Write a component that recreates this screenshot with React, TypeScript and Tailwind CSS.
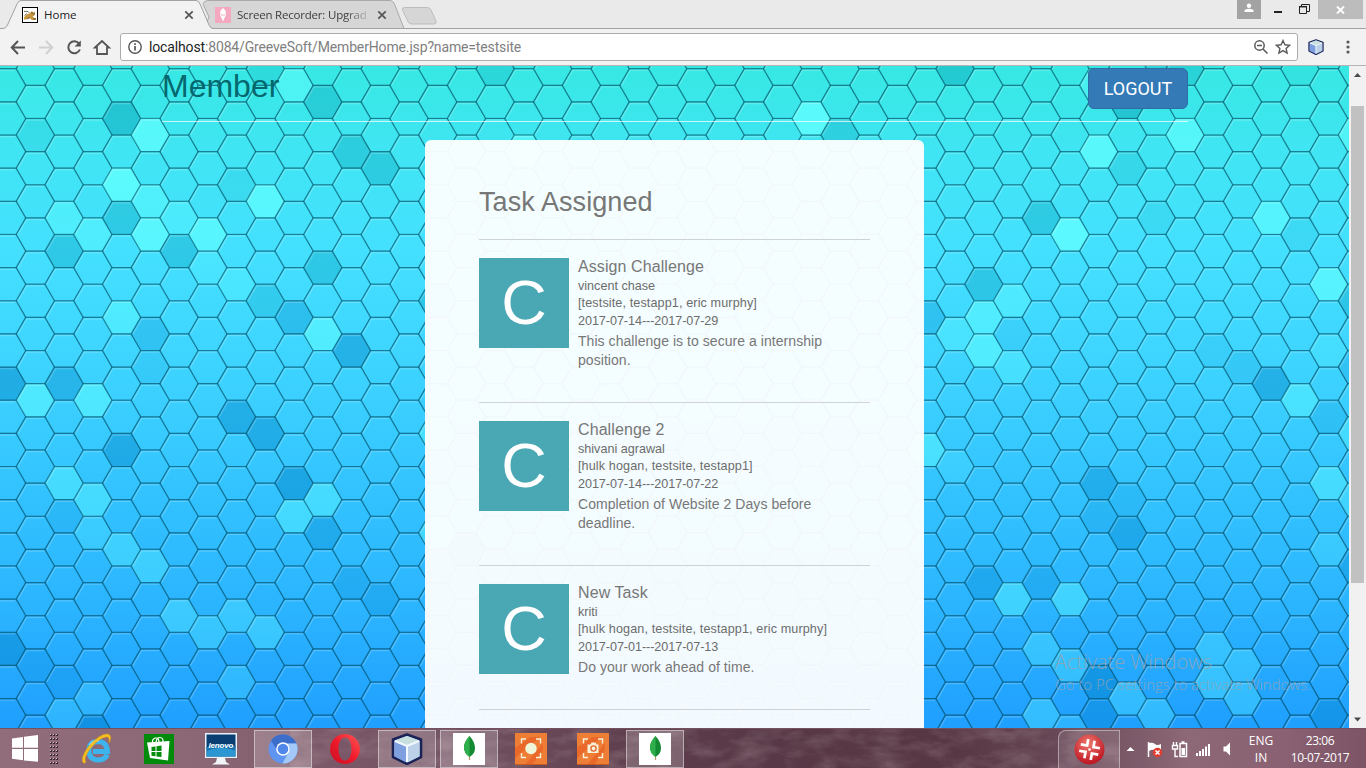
import React from "react";

const DX = 28.74;
const DY = 33.15;

// [x, y, tint]: positive lightens a cell, negative darkens it
const TINTS: [number, number, number][] = [
  [121, 119, -4], [264, 68, -1.5], [323, 102, -3], [35, 135, -1], [352, 152, -3], [380, 168, -3],
  [237, 185, -1], [121, 218, -3], [64, 252, -3], [178, 252, -3], [323, 267, -3], [265, 301, -2.2],
  [294, 317, -3], [150, 334, -2.2], [352, 350, -4], [6, 383, -4.5], [64, 384, -3.5], [150, 367, -1],
  [294, 85, 5], [150, 135, 7], [121, 184, 8], [150, 201, 4.5], [64, 217, 4], [93, 234, 4], [150, 234, 7],
  [178, 217, 3], [207, 234, 6.5], [265, 201, 7], [207, 267, 2], [237, 284, 2.5], [121, 317, 4.5],
  [323, 334, 5.5], [35, 400, 5], [93, 400, 5], [35, 102, 1],
  [237, 417, -4], [265, 433, -4], [121, 450, -4], [294, 483, -4.5], [64, 516, -1.2], [323, 533, -3],
  [352, 583, -2], [380, 599, -2.2], [6, 649, -4], [35, 666, -1.6], [64, 682, -1.6], [93, 732, -4.5],
  [64, 483, 4], [93, 499, 4], [93, 533, 2], [121, 549, 3], [150, 566, 3], [323, 500, 4], [294, 517, 4],
  [178, 616, 3], [237, 616, 2.7], [207, 633, 2.7], [265, 633, 3], [237, 682, 2], [93, 699, 2], [64, 715, 2.2],
  [438, 433, 4], [438, 533, 4], [438, 300, -3],
  [955, 68, -3.5], [1127, 102, -4], [1185, 68, -2.5], [1271, 52, -3], [1156, 52, -2], [1242, 68, 2],
  [1300, 68, -0.6], [1127, 168, -1.6], [1041, 218, -3], [1156, 218, -1], [1300, 234, -1], [984, 284, -3],
  [926, 317, -2.5], [1012, 334, -0.8], [1213, 350, -0.8], [1242, 367, -1.3], [1271, 384, -4],
  [1098, 152, 7], [1185, 135, 6.5], [1070, 234, 8], [1271, 218, 6], [1328, 284, 6.5], [1012, 301, 4],
  [984, 317, 5], [955, 334, 3], [984, 351, 5.5], [1012, 367, 3], [1300, 400, 4], [1098, 85, 4],
  [1357, 135, 5], [1357, 300, -3], [1328, 350, 2], [1357, 367, -2], [1328, 417, -1.6],
  [1098, 483, -3.2], [1127, 499, -1.2], [1098, 516, -1.6], [1127, 533, -3.4], [984, 583, -2.8],
  [1041, 583, -2], [1098, 682, -4.5], [1098, 715, -3.2], [1328, 715, -3.4], [1357, 567, -3],
  [1357, 433, 3], [1357, 500, 3], [926, 450, 4.5], [955, 467, 1.5], [1328, 483, 4], [1328, 549, 2],
  [1012, 599, 4], [1070, 599, 4], [1041, 649, 2.7], [1070, 665, 2.7], [1213, 649, 2.5], [1242, 665, 2.5],
  [1213, 682, 3], [1242, 699, 2.7], [1127, 699, 2.7], [1156, 715, 2.7], [1041, 715, 3], [1070, 732, 2],
  [495, 68, -2], [811, 118, 8], [840, 135, -2.5], [524, 152, 6], [466, 550, -4],
];

const CELLS = (() => {
  const out: { x: number; y: number; t: number }[] = [];
  for (let c = 0; c <= 48; c++) {
    for (let r = -2; r <= 20; r++) {
      const x = 6.6 + DX * c;
      const y = (c % 2 ? 101.9 : 85.3) + DY * r;
      const hit = TINTS.find((k) => Math.abs(k[0] - x) < 9 && Math.abs(k[1] - y) < 9);
      out.push({ x, y: y - 66, t: hit ? hit[2] : 0 });
    }
  }
  return out;
})();

const hex = (x: number, y: number) => {
  const w = 19.15, t = 9.6, h = 16.57;
  return `${x - w},${y} ${x - t},${y - h} ${x + t},${y - h} ${x + w},${y} ${x + t},${y + h} ${x - t},${y + h}`;
};

const Honeycomb = () => (
  <svg className="absolute inset-0" width="1349" height="662" viewBox="0 0 1349 662">
    <defs>
      <linearGradient id="sea" x1="0" y1="0" x2="0" y2="1">
        <stop offset="0" stopColor="#36e8e3" />
        <stop offset="0.13" stopColor="#40e5f3" />
        <stop offset="0.28" stopColor="#44e0ff" />
        <stop offset="0.5" stopColor="#3bd0ff" />
        <stop offset="0.65" stopColor="#32c2ff" />
        <stop offset="0.82" stopColor="#2bb4ff" />
        <stop offset="1" stopColor="#1f9fff" />
      </linearGradient>
    </defs>
    <rect width="1349" height="662" fill="url(#sea)" />
    {CELLS.map((c, i) => (
      <g key={i}>
        {c.t !== 0 && (
          <polygon points={hex(c.x, c.y)} fill={c.t > 0 ? "#62ffff" : c.y > 250 ? "#0080c4" : "#0094b0"} fillOpacity={Math.abs(c.t) / 10} />
        )}
        <polyline
          points={`${c.x - 17.2},${c.y} ${c.x - 8.6},${c.y - 14.9} ${c.x + 8.6},${c.y - 14.9}`}
          fill="none" stroke="#ffffff" strokeOpacity="0.2" strokeWidth="1.2"
        />
        <polygon points={hex(c.x, c.y)} fill="none" stroke="#00485c" strokeOpacity="0.4" strokeWidth="1.2" />
      </g>
    ))}
  </svg>
);

const Tomcat = () => (
  <svg width="16" height="16" viewBox="0 0 16 16">
    <rect x="0.5" y="0.5" width="15" height="15" fill="#fff" stroke="#000" />
    <path d="M2 10.500Q4 7 7.500 6.500L10 4l1 1.500 2-1-.3 3.500-2 1.500 1.500 1.500H14V13H10L7.500 11 4 12.500H2z" fill="#c8963c" />
    <path d="M2 4.500h4L7.500 6M2.500 8.500L5 6.500M9.500 5l1 2M12 6v2M5 12l3-1.500M11 12h3" stroke="#5b5244" strokeWidth=".8" fill="none" />
  </svg>
);

const Cone = () => (
  <svg width="16" height="16" viewBox="0 0 16 16">
    <rect width="16" height="16" fill="#f4a9c0" />
    <path d="M8 1l2 2 1 2-.6 2 .6 1-1.500 3-1.500 3.500L6.500 11 5 8l.6-1L5 5l1-2z" fill="#fff" />
    <path d="M6 8h4" stroke="#e9b7c6" />
  </svg>
);

const Cube = ({ size }: { size: number }) => (
  <svg width={size} height={size} viewBox="0 0 32 32">
    <path d="M16 1.500L30 6.500V24L16 31 2 24V6.500z" fill="#a9c4ea" stroke="#1b2255" strokeWidth="2.600" strokeLinejoin="round" />
    <path d="M16 3L28 7.500 16 12.500 4 7.500z" fill="#c8e0dd" />
    <path d="M3.500 8.500L15.500 13.500V29.500L3.500 23.500z" fill="#7e9fe0" />
    <path d="M16.500 13.500L28.500 8.500V23.500L16.500 29.500z" fill="#bcd0e8" />
    <path d="M16 29V13L28 8M16 13L4 8" stroke="#f2f8ff" strokeWidth="2" fill="none" />
  </svg>
);

const TabClose = () => (
  <svg width="10" height="10" viewBox="0 0 10 10" className="shrink-0">
    <path d="M1.300 1.300l7.400 7.400M8.700 1.300L1.300 8.700" stroke="#555" strokeWidth="1.700" />
  </svg>
);

const TabStrip = () => (
  <div className="relative flex h-[29px] shrink-0 bg-[#eaeaea] font-['Open_Sans','Noto_Sans',sans-serif] text-[11.5px]">
    <svg className="absolute inset-0" width="1366" height="29" viewBox="0 0 1366 29">
      <path d="M204 28.500L209 17 203 4Q204 .5 208 .5H390Q393 .5 394.500 4L404 28.500z" fill="#d6d6d6" stroke="#a9a9a9" />
      <path d="M404.500 7.500H427Q430 7.500 431 10L436 21Q437 24 433 24H412Q409 24 408 21.500L402.500 10Q402 7.500 404.500 7.500z" fill="#d6d6d6" stroke="#bcbcbc" />
      <path d="M211 28.500H1366" stroke="#a2a2a2" />
      <path d="M0 28.500H3Q6 28.500 7.500 25L17 4Q18.500 .5 21 .5H196Q199 .5 200 4L209 25Q210.500 28.500 213 28.500V30H0z" fill="#f2f2f2" stroke="#a2a2a2" />
    </svg>
    <div className="relative flex w-[194px] items-center pl-[22px]">
      <Tomcat />
      <span className="ml-[6px] flex-1 text-[#222]">Home</span>
      <TabClose />
    </div>
    <div className="relative flex w-[194px] items-center pl-[21px]">
      <Cone />
      <span className="ml-[6px] w-[135px] whitespace-nowrap tracking-[-0.2px] text-[#3c3c3c] [mask-image:linear-gradient(to_right,black_108px,transparent_136px)]">Screen Recorder: Upgrad</span>
      <span className="ml-[5px]"><TabClose /></span>
    </div>
    <div className="relative ml-auto flex h-[19px] items-start">
      <div className="flex h-[19px] w-6 items-center justify-center bg-[#a3a3a3]">
        <svg width="10" height="10" viewBox="0 0 10 10" className="mb-1"><circle cx="5" cy="2.800" r="2.200" fill="#fff" /><path d="M0.500 9V7.500Q1 6 5 5.700 9 6 9.500 7.500V9z" fill="#fff" /></svg>
      </div>
      <svg width="57" height="19" viewBox="0 0 57 19">
        <path d="M13 12h8" stroke="#222" strokeWidth="2" />
        <path d="M38.500 6.500h7v7h-7zM40.500 6V4.500h8v7H46" fill="none" stroke="#222" strokeWidth="1" />
        <path d="M38 6.700h8" stroke="#222" strokeWidth="1.500" />
      </svg>
      <div className="mr-[3px] flex h-[19px] w-[45px] items-center justify-center bg-[#bcbcbc]">
        <svg width="9" height="8" viewBox="0 0 9 8"><path d="M1 .5l7 7M8 .5l-7 7" stroke="#fff" strokeWidth="1.900" /></svg>
      </div>
    </div>
  </div>
);

const Toolbar = () => (
  <div className="flex h-[37px] shrink-0 items-center border-b border-[#b6b4b6] bg-[#f2f2f2]">
    <svg width="112" height="20" viewBox="0 0 112 20" fill="none" strokeWidth="2" className="ml-[8px] shrink-0">
      <path d="M17 10.500H4M10 4L3.800 10.500 10 17" stroke="#555" />
      <path d="M31 10.500H44M38 4L44.200 10.500 38 17" stroke="#d0d0d0" />
      <path d="M71 6.500A6 6 0 1 0 71.900 12.500" stroke="#555" />
      <path d="M72.800 3.500V9.500H66.500z" fill="#555" />
      <path d="M87 10.500L94 4l7 6.500H99V17H89V10.500z" stroke="#555" strokeWidth="1.800" />
    </svg>
    <div className="flex h-7 w-[1178px] shrink-0 items-center rounded-[3px] border border-[#aeaaae] bg-white pl-[7px] pr-[6px]">
      <svg width="14" height="14" viewBox="0 0 14 14" className="shrink-0"><circle cx="7" cy="7" r="6.200" fill="none" stroke="#555" strokeWidth="1.400" /><path d="M7 6v4.500M7 3.300v1.700" stroke="#555" strokeWidth="1.700" /></svg>
      <span className="ml-[7px] flex-1 font-['Roboto',sans-serif] text-[14px] tracking-[-0.145px] text-[#808080]"><span className="text-[#222]">localhost</span>:8084/GreeveSoft/MemberHome.jsp?name=testsite</span>
      <svg width="38" height="16" viewBox="0 0 38 16" fill="none" stroke="#5a5a5a">
        <circle cx="6.500" cy="6.500" r="4.700" strokeWidth="1.500" /><path d="M4 6.500h5M10 10l4.500 4.500" strokeWidth="1.600" />
        <path d="M30 1.500l1.900 4.300 4.700.5-3.500 3.100 1 4.600-4.100-2.400-4.100 2.400 1-4.600-3.500-3.100 4.700-.5z" strokeWidth="1.400" />
      </svg>
    </div>
    <div className="ml-[10px]"><Cube size={16} /></div>
    <svg width="4" height="14" viewBox="0 0 4 14" className="ml-[22px]" fill="#5a5a5a"><circle cx="2" cy="2" r="1.600" /><circle cx="2" cy="7" r="1.600" /><circle cx="2" cy="12" r="1.600" /></svg>
  </div>
);

type Task = { title: string; by: string; team: string; dates: string; text: string; height: string };

const TASKS: Task[] = [
  { title: "Assign Challenge", by: "vincent chase", team: "[testsite, testapp1, eric murphy]", dates: "2017-07-14---2017-07-29", text: "This challenge is to secure a internship position.", height: "h-[163px]" },
  { title: "Challenge 2", by: "shivani agrawal", team: "[hulk hogan, testsite, testapp1]", dates: "2017-07-14---2017-07-22", text: "Completion of Website 2 Days before deadline.", height: "h-[163px]" },
  { title: "New Task", by: "kriti", team: "[hulk hogan, testsite, testapp1, eric murphy]", dates: "2017-07-01---2017-07-13", text: "Do your work ahead of time.", height: "h-[144px]" },
];

const TaskRow = ({ task }: { task: Task }) => (
  <div className={`flex border-t border-[#cfd3d5] pt-[18px] ${task.height}`}>
    <div className="flex h-[90px] w-[90px] shrink-0 justify-center bg-[#4aa8b5] text-[63px] leading-[89px] text-white">C</div>
    <div className="ml-[9px] w-[270px] text-[12.6px] leading-[17.5px] text-[#6c6c6c]">
      <div className="mb-[1.5px] text-[16px] leading-[18px] tracking-[0.09px] text-[#777]">{task.title}</div>
      <div>{task.by}</div>
      <div className="whitespace-nowrap tracking-[0.12px]">{task.team}</div>
      <div className="tracking-[-0.05px]">{task.dates}</div>
      <div className="mt-[1.5px] text-[14px] leading-[19px] tracking-[0.05px] text-[#777]">{task.text}</div>
    </div>
  </div>
);

const Page = () => (
  <div className="relative h-[662px] w-[1349px] overflow-hidden font-['Liberation_Sans',Arial,sans-serif]">
    <Honeycomb />
    <div className="relative ml-[162px] flex h-[56px] w-[1026px] items-start justify-between border-b border-white/70">
      <h1 className="mt-[2px] text-[32px] leading-[36px] text-[#05686e]">Member</h1>
      <button className="mt-[2px] h-[41px] w-[100px] rounded-[6px] border border-[#2e6da4] bg-[#337ab7] font-['Roboto',sans-serif] text-[18px] text-white">LOGOUT</button>
    </div>
    <div className="relative ml-[425px] mt-[18px] h-[600px] w-[499px] rounded-[6px] bg-white/[0.945] px-[54px] pt-[45px]">
      <h2 className="h-[54px] text-[27px] leading-[35px] tracking-[0.08px] text-[#777]">Task Assigned</h2>
      {TASKS.map((t) => <TaskRow key={t.title} task={t} />)}
      <div className="h-px bg-[#cfd3d5]" />
    </div>
    <div className="absolute left-[1055px] top-[583px] font-['Open_Sans','Noto_Sans',sans-serif] font-light text-[#9aa3ab]/85">
      <div className="whitespace-nowrap text-[20px] leading-[26px]">Activate Windows</div>
      <div className="whitespace-nowrap text-[14.9px] leading-[19px]">Go to PC settings to activate Windows.</div>
    </div>
  </div>
);

const Scrollbar = () => (
  <div className="flex w-[17px] flex-col items-center bg-[#f1f1f1]">
    <svg width="17" height="17" viewBox="0 0 17 17"><path d="M5 11h7L8.500 7z" fill="#4b4b4b" /></svg>
    <div className="mt-[23px] h-[477px] w-[13px] bg-[#c1c1c1]" />
    <svg width="17" height="17" viewBox="0 0 17 17" className="mt-auto"><path d="M5 6.500h7L8.500 10.500z" fill="#4b4b4b" /></svg>
  </div>
);

const Leaf = () => (
  <svg width="32" height="32" viewBox="0 0 32 32">
    <rect width="32" height="32" fill="#fff" />
    <path d="M16.500 3Q22 9 22 15T16.500 24Q11 20 11 14.500T16.500 3z" fill="#148a33" />
    <path d="M16.500 3Q11 9 11 14.500T16.500 24z" fill="#2fae4c" />
    <path d="M16.500 24v3" stroke="#b79a6a" strokeWidth="1.200" />
  </svg>
);

const Capture = ({ camera }: { camera?: boolean }) => (
  <svg width="32" height="32" viewBox="0 0 32 32">
    <rect width="32" height="32" fill="#ee7d35" />
    <path d="M0 32V15L15 4H25L0 25zM10 32L28 10V17L17 32z" fill="#e86428" fillOpacity=".8" />
    <path d="M0 31.500h32" stroke="#c95a20" />
    <path d="M6.500 10.500V6H11M21 6h4.500V10.500M25.500 20V24.500H21M11 24.500H6.500V20" fill="none" stroke="#f6f1d8" strokeWidth="1.400" />
    {camera ? (
      <g><path d="M10.500 11.500h3l1-2h4l1 2h2V20h-11z" fill="#f6f1d8" /><circle cx="16.500" cy="15.500" r="2.600" fill="#f6f1d8" stroke="#e86428" strokeWidth="1.300" /></g>
    ) : (
      <circle cx="16" cy="15.500" r="5.700" fill="#eff5d8" />
    )}
  </svg>
);

const Slot = ({ open, children }: { open?: boolean; children: React.ReactNode }) => (
  <div className={`mr-1 flex h-[38px] w-[58px] items-center justify-center ${open ? "border border-white/45 bg-white/20" : ""}`}>{children}</div>
);

const Taskbar = () => (
  <div className="relative flex h-10 shrink-0 items-center overflow-hidden border-t border-[#75505f] bg-[linear-gradient(to_right,#916d7c_0%,#8b6775_15%,#7b5867_24%,#70505f_35%,#5f3f4d_46%,#583846_55%,#573743_70%,#694957_78%,#8d6877_87%,#8a6172_94%,#7c5466_100%)] font-['Open_Sans','Noto_Sans',sans-serif]">
    <svg className="absolute inset-0 opacity-20" width="1366" height="40">
      <filter id="mist" x="0" y="0" width="100%" height="100%">
        <feTurbulence type="fractalNoise" baseFrequency="0.03 0.07" numOctaves="5" seed="8" />
        <feColorMatrix values="0 0 0 0 .9  0 0 0 0 .78  0 0 0 0 .84  1.8 0 0 0 -.7" />
      </filter>
      <rect x="290" width="830" height="40" filter="url(#mist)" />
    </svg>
    <svg width="50" height="38" viewBox="0 0 50 38" className="relative ml-3">
      <path d="M0 8.500L11 7V17.800H0zM12 6.800L26 5V17.800H12zM0 19H11V30.300L0 28.800zM12 19H26V31.800L12 30.500z" fill="#fff" />
      {[0, 1, 2].map((c) => Array.from({ length: 8 }, (_, r) => (
        <g key={`${c}-${r}`}><rect x={38 + c * 3} y={4 + r * 4} width="2" height="2" fill="#3d2832" /><rect x={38 + c * 3} y={4 + r * 4} width="1" height="1" fill="#d8c6cc" /></g>
      )))}
    </svg>
    <div className="relative ml-[6px] flex">
      <Slot>
        <svg width="32" height="32" viewBox="0 0 32 32">
          <path d="M26.500 21.500Q23.500 27 17 27 8 26.500 8 17.500T17 8.500Q26 9 26.500 18.500H12" fill="none" stroke="#3cb4ee" strokeWidth="5" />
          <path d="M9 12.500Q12 7.500 18 7.500" fill="none" stroke="#b9e8fb" strokeWidth="2" />
          <path d="M3 30.500Q-2 27 7 14 19 0 27 1 32 3 28 10 29 3 25 4 18 5 9 16 2 26 5 29z" fill="#f6bf22" stroke="#d99a10" strokeWidth=".5" />
        </svg>
      </Slot>
      <Slot>
        <svg width="30" height="30" viewBox="0 0 30 30">
          <rect width="30" height="30" fill="#008c0a" />
          <path d="M3 8.500L25.500 7 24 26.500 6 24z" fill="#fff" />
          <path d="M8.500 9V7Q9 4 12 4T15 8.500M12 8.500Q12.500 3.500 16 3.500T19 8.500" stroke="#fff" strokeWidth="1.200" fill="none" />
          <path d="M7.500 13l4-.5V17h-4zM12.500 12.300l5-.7V17h-5zM7.500 18h4v4.300l-4-.5zM12.500 18h5v5l-5-.6z" fill="#008c0a" />
        </svg>
      </Slot>
      <Slot>
        <svg width="32" height="32" viewBox="0 0 32 32">
          <rect width="32" height="25" fill="#e9f2f8" /><rect x="1.500" y="1.500" width="29" height="22" fill="#0a3f74" />
          <path d="M1.500 18Q14 12 30.500 17V23.500h-29z" fill="#2b96d2" /><path d="M1.500 16Q16 10 30.500 15" stroke="#1b78b4" strokeWidth="3" fill="none" />
          <path d="M12 25h8l1 4 4 2.500H7L11 29z" fill="#f2f5f7" />
          <text x="16" y="14.500" fill="#fff" fontSize="8" fontWeight="bold" fontStyle="italic" textAnchor="middle" textLength="25" fontFamily="Liberation Sans">lenovo</text>
        </svg>
      </Slot>
      <Slot open>
        <svg width="30" height="30" viewBox="0 0 30 30">
          <circle cx="15" cy="15" r="14.500" fill="#5f94f0" />
          <path d="M15 .5A14.500 14.500 0 0 1 28.500 9.500H15A5.500 5.500 0 0 0 10 17.500L3 6.500A14.500 14.500 0 0 1 15 .5z" fill="#3b6dc9" />
          <path d="M28.500 9.500A14.500 14.500 0 0 1 14.500 29.500L20.500 18A5.500 5.500 0 0 0 18 9.500z" fill="#a3c8fa" />
          <circle cx="15" cy="15" r="6.800" fill="#fff" /><circle cx="15" cy="15" r="5.300" fill="#4f87ea" />
        </svg>
      </Slot>
      <Slot>
        <svg width="32" height="32" viewBox="0 0 32 32">
          <defs><linearGradient id="op" x1="0" x2="1" y1="1" y2="0"><stop offset="0" stopColor="#c80f22" /><stop offset=".5" stopColor="#f01a2c" /><stop offset="1" stopColor="#ff5a55" /></linearGradient></defs>
          <path fillRule="evenodd" d="M16 1A15 15 0 1 1 15.990 1zM16 4.500C11.500 4.500 9.500 10 9.500 16S11.500 27.500 16 27.500 22.500 22 22.500 16 20.500 4.500 16 4.500z" fill="url(#op)" />
        </svg>
      </Slot>
      <Slot open><Cube size={32} /></Slot>
      <Slot open><Leaf /></Slot>
      <Slot><Capture /></Slot>
      <Slot><Capture camera /></Slot>
      <Slot open><Leaf /></Slot>
    </div>
    <div className="relative ml-auto flex h-[38px] w-[62px] items-center justify-center rounded-tl-lg border-l border-t border-r border-white/40 bg-white/10">
      <svg width="31" height="31" viewBox="0 0 31 31">
        <defs><radialGradient id="red" cx=".45" cy=".3" r=".7"><stop offset="0" stopColor="#f07a70" /><stop offset="1" stopColor="#bd1320" /></radialGradient></defs>
        <circle cx="15.500" cy="15.500" r="15" fill="url(#red)" />
        {[0, 90, 180, 270].map((a) => (
          <path key={a} transform={`rotate(${a + 10} 15.500 15.500)`} d="M12.500 5.500V12H6" fill="none" stroke="#fff" strokeWidth="2.700" />
        ))}
        <circle cx="15.500" cy="15.500" r="1.300" fill="#fff" />
      </svg>
    </div>
    <svg width="112" height="20" viewBox="0 0 112 20" className="relative">
      <path d="M6.500 12h8L10.500 8z" fill="#fff" />
      <path d="M28.500 3v15" stroke="#fff" strokeWidth="1.500" /><path d="M29 4Q33 3 35 5T41 5V12Q37 13 35 11.500T29 12z" fill="#fff" />
      <circle cx="37.500" cy="13.500" r="4.700" fill="#e23b2e" /><path d="M35.500 11.500l4 4M39.500 11.500l-4 4" stroke="#fff" strokeWidth="1.500" />
      <path d="M60 4.500h6.500v13H60zM61.500 3h3" fill="none" stroke="#fff" strokeWidth="1.500" /><path d="M61.500 9h3.500v7h-3.500z" fill="#fff" />
      <path d="M53.500 3v3M56.500 3v3M52.500 6.500h5v3.500h-5zM55 10v7.500h3" fill="none" stroke="#fff" strokeWidth="1.400" />
      <path d="M76 14h2v3h-2zM79 12h2v5h-2zM82 10h2v7h-2zM85 7.500h2v9.500h-2zM88 5h2v12h-2z" fill="#fff" />
      <path d="M103.500 7.500h2.500l4-4v13l-4-4h-2.500z" fill="#fff" />
    </svg>
    <div className="relative ml-[2px] w-[54px] text-center text-[12px] leading-[17px] text-white"><div>ENG</div><div>IN</div></div>
    <div className="relative mr-[14px] w-[64px] whitespace-nowrap text-center text-[12px] leading-[17px] tracking-[-0.4px] text-white"><div>23:06</div><div>10-07-2017</div></div>
  </div>
);

export default function App() {
  return (
    <div className="flex h-[768px] w-[1366px] flex-col overflow-hidden">
      <TabStrip />
      <Toolbar />
      <div className="flex h-[662px] shrink-0">
        <Page />
        <Scrollbar />
      </div>
      <Taskbar />
    </div>
  );
}
